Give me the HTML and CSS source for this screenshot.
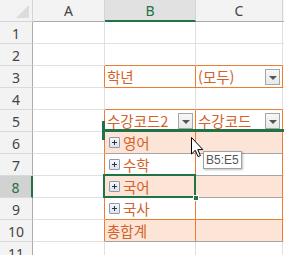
FILE: index.html
```html
<!DOCTYPE html>
<html lang="ko">
<head>
    <meta charset="UTF-8">
    <title>피벗 테이블</title>
    <link rel="stylesheet" href="styles.css">
</head>
<body>
<section class="sheet">
    <!-- 열 머리글 -->
    <div class="hd corner"><em class="tri"></em></div>
    <div class="hd col">A</div>
    <div class="hd col sel">B</div>
    <div class="hd col">C</div>
    <div class="hd col"></div>

    <!-- 1 -->
    <div class="hd row">1</div>
    <div class="c"></div><div class="c"></div><div class="c"></div><div class="c"></div>
    <!-- 2 -->
    <div class="hd row">2</div>
    <div class="c"></div><div class="c ob"></div><div class="c ob"></div><div class="c"></div>
    <!-- 3 -->
    <div class="hd row">3</div>
    <div class="c or"></div>
    <div class="c pv ob"><span class="txt">학년</span></div>
    <div class="c pv ob"><span class="txt">(모두)</span><em class="dd"></em></div>
    <div class="c"></div>
    <!-- 4 -->
    <div class="hd row">4</div>
    <div class="c"></div><div class="c ob"></div><div class="c ob"></div><div class="c"></div>
    <!-- 5 -->
    <div class="hd row">5</div>
    <div class="c or"></div>
    <div class="c pv ob"><span class="txt">수강코드2</span><em class="dd"></em></div>
    <div class="c pv ob"><span class="txt">수강코드</span><em class="dd"></em></div>
    <div class="c"></div>
    <!-- 6 -->
    <div class="hd row">6</div>
    <div class="c or"></div>
    <div class="c pv fill"><em class="plus"></em><span class="txt">영어</span></div>
    <div class="c pv fill"></div>
    <div class="c"></div>
    <!-- 7 -->
    <div class="hd row">7</div>
    <div class="c or"></div>
    <div class="c pv"><em class="plus"></em><span class="txt">수학</span></div>
    <div class="c pv"></div>
    <div class="c"></div>
    <!-- 8 -->
    <div class="hd row sel">8</div>
    <div class="c or"></div>
    <div class="c pv fill"><em class="plus"></em><span class="txt">국어</span></div>
    <div class="c pv fill"></div>
    <div class="c"></div>
    <!-- 9 -->
    <div class="hd row">9</div>
    <div class="c or"></div>
    <div class="c pv ob"><em class="plus"></em><span class="txt">국사</span></div>
    <div class="c pv ob"></div>
    <div class="c"></div>
    <!-- 10 -->
    <div class="hd row">10</div>
    <div class="c or"></div>
    <div class="c pv fill"><span class="txt">총합계</span></div>
    <div class="c pv fill"></div>
    <div class="c"></div>
    <!-- 11 -->
    <div class="hd row">11</div>
    <div class="c"></div><div class="c"></div><div class="c"></div><div class="c"></div>

    <!-- 선택 셀 / 끌기 표시 -->
    <div class="active"><em class="handle"></em></div>
    <div class="dropLine"></div>
    <div class="dropTick"></div>
    <div class="tooltip">B5:E5</div>
    <svg class="cursor" width="13" height="21" viewBox="0 0 13 21">
        <path d="M0.5 0.5 L0.5 17 L4.3 13.4 L7 19.6 L9.4 18.6 L6.8 12.6 L11.8 12.6 Z" fill="#fff" stroke="#000" stroke-width="1" stroke-linejoin="miter"/>
    </svg>
</section>
</body>
</html>
```

FILE: styles.css
```css
* {
    margin: 0;
    padding: 0;
    box-sizing: border-box;
}

html, body {
    width: 100%;
    height: 100%;
    overflow: hidden;
    background: #fff;
}

.sheet {
    position: relative;
    display: grid;
    grid-template-columns: 33px 72px 91px 87px 1fr;
    grid-template-rows: 22px repeat(11, 22px);
    font-family: "Noto Sans CJK KR", "Noto Sans", sans-serif;
}

/* 머리글 */
.hd {
    display: flex;
    align-items: center;
    justify-content: center;
    background: #f3f3f3;
    border-right: 1px solid #d4d4d4;
    border-bottom: 1px solid #d4d4d4;
    font-family: "Noto Sans", "Liberation Sans", sans-serif;
    font-size: 14px;
    color: #444;
}

.hd.col {
    border-bottom: 1px solid #ababab;
}

.hd.row {
    border-right: 1px solid #ababab;
    border-bottom: 1px solid #dadada;
    padding-top: 1px;
}

.hd.col.sel {
    background: #e1e1e1;
    color: #217346;
    border-bottom: 2px solid #217346;
}

.hd.row.sel {
    background: #d2d2d2;
    color: #217346;
    border-right: 2px solid #217346;
}

.corner {
    position: relative;
}

.corner .tri {
    position: absolute;
    right: 3px;
    bottom: 3px;
    width: 0;
    height: 0;
    border-left: 13px solid transparent;
    border-bottom: 13px solid #dcdcdc;
}

/* 셀 */
.c {
    display: flex;
    align-items: center;
    padding-left: 2px;
    overflow: hidden;
    border-right: 1px solid #e1e1e1;
    border-bottom: 1px solid #e1e1e1;
}

.c.ob {
    border-bottom-color: #ed7d31;
}

.c.or {
    border-right-color: #ed7d31;
}

.c.pv {
    border-right-color: #ed7d31;
    border-bottom-color: #a6a6a6;
}

.c.pv.ob {
    border-bottom-color: #ed7d31;
}

.c.fill {
    background: #fce4d6;
}

.txt {
    flex: 1;
    min-width: 0;
    overflow: hidden;
    white-space: nowrap;
    font-size: 14.5px;
    line-height: 20px;
    color: #d2622a;
}

.dd {
    position: relative;
    flex: none;
    width: 15px;
    height: 16px;
    margin-right: 2px;
    border: 1px solid #a6a6a6;
    background: linear-gradient(#f7f7f7, #e9e9e9);
}

.dd::after {
    content: "";
    position: absolute;
    left: 3px;
    top: 6px;
    border-left: 4px solid transparent;
    border-right: 4px solid transparent;
    border-top: 4px solid #555;
}

.c:nth-child(18) .dd {
    margin-right: 1px;
}

.plus {
    position: relative;
    flex: none;
    width: 11px;
    height: 11px;
    margin: 0 3px 0 2px;
    border: 1px solid #8e9ab0;
    border-radius: 1px;
    background: linear-gradient(#f4f6fa, #dde3ec);
}

.plus::before, .plus::after {
    content: "";
    position: absolute;
    background: #333;
}

.plus::before {
    left: 2px;
    top: 4px;
    width: 5px;
    height: 1px;
}

.plus::after {
    left: 4px;
    top: 2px;
    width: 1px;
    height: 5px;
}

/* 겹쳐 그리는 것들 */
.active {
    position: absolute;
    left: 103px;
    top: 174px;
    width: 93px;
    height: 24px;
    border: 2px solid #217346;
}

.active .handle {
    position: absolute;
    right: -5px;
    bottom: -5px;
    width: 6px;
    height: 6px;
    background: #217346;
    border: 1px solid #fff;
}

.dropLine {
    position: absolute;
    left: 102px;
    right: 0;
    top: 129px;
    height: 3px;
    background: #217346;
}

.dropTick {
    position: absolute;
    left: 102px;
    top: 121px;
    width: 3px;
    height: 19px;
    background: #217346;
}

.tooltip {
    position: absolute;
    left: 203px;
    top: 151px;
    height: 18px;
    padding: 0 2px;
    line-height: 16px;
    font-family: "Liberation Sans", "Noto Sans", sans-serif;
    font-size: 12px;
    color: #555;
    background: #fff;
    border: 1px solid #a0a0a0;
    box-shadow: 1px 1px 2px rgba(0, 0, 0, 0.25);
}

.cursor {
    position: absolute;
    left: 191px;
    top: 137px;
}
```
